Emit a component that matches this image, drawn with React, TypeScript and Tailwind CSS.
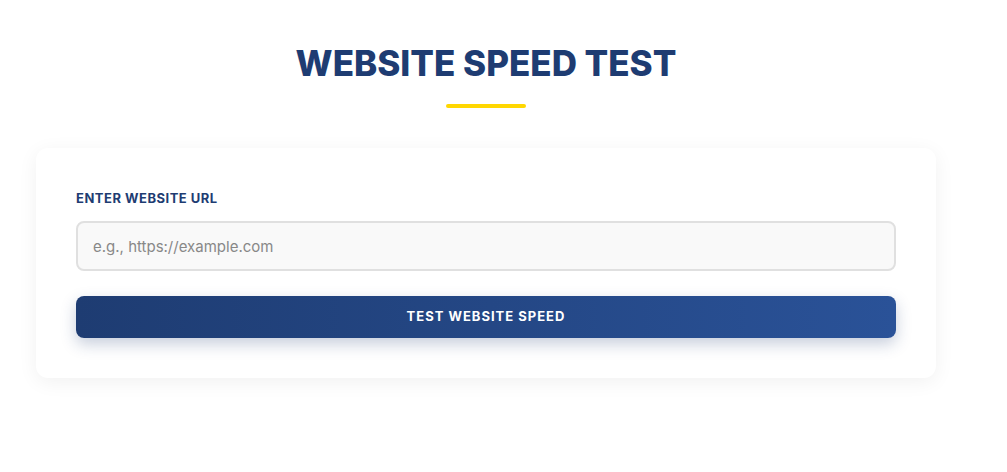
export default function App() {
  return (
    <div className="min-h-[472px] bg-white" style={{ fontFamily: "Inter, 'Noto Sans', sans-serif" }}>
      <div className="w-[972px] pt-[41px]">
        <div className="flex flex-col items-center">
          <h1 className="text-[35px] leading-[44px] font-extrabold text-[#1e3c72]">WEBSITE SPEED TEST</h1>
          <div className="mt-[19px] h-[4px] w-[80px] rounded-full bg-[#ffd700]"></div>
        </div>
        <div className="mx-auto mt-[40px] w-[900px] rounded-[12px] bg-white p-[40px] shadow-[0_4px_20px_rgba(0,0,0,0.06)]">
          <label className="block text-[13px] font-bold tracking-[0.5px] text-[#1e3c72] leading-[20px]">ENTER WEBSITE URL</label>
          <input
            className="mt-[13px] block h-[50px] w-full rounded-[8px] border-2 border-[#e0e0e0] bg-[#f9f9f9] px-[15px] text-[15px] text-[#333] placeholder:text-[#888] outline-none"
            placeholder="e.g., https://example.com"
          />
          <button className="mt-[25px] flex h-[42px] w-full items-center justify-center rounded-[8px] bg-gradient-to-r from-[#1e3c72] to-[#2a5298] text-[13px] font-bold tracking-[1px] text-white shadow-[0_6px_15px_rgba(30,60,114,0.25)]">
            TEST WEBSITE SPEED
          </button>
        </div>
      </div>
    </div>
  );
}
